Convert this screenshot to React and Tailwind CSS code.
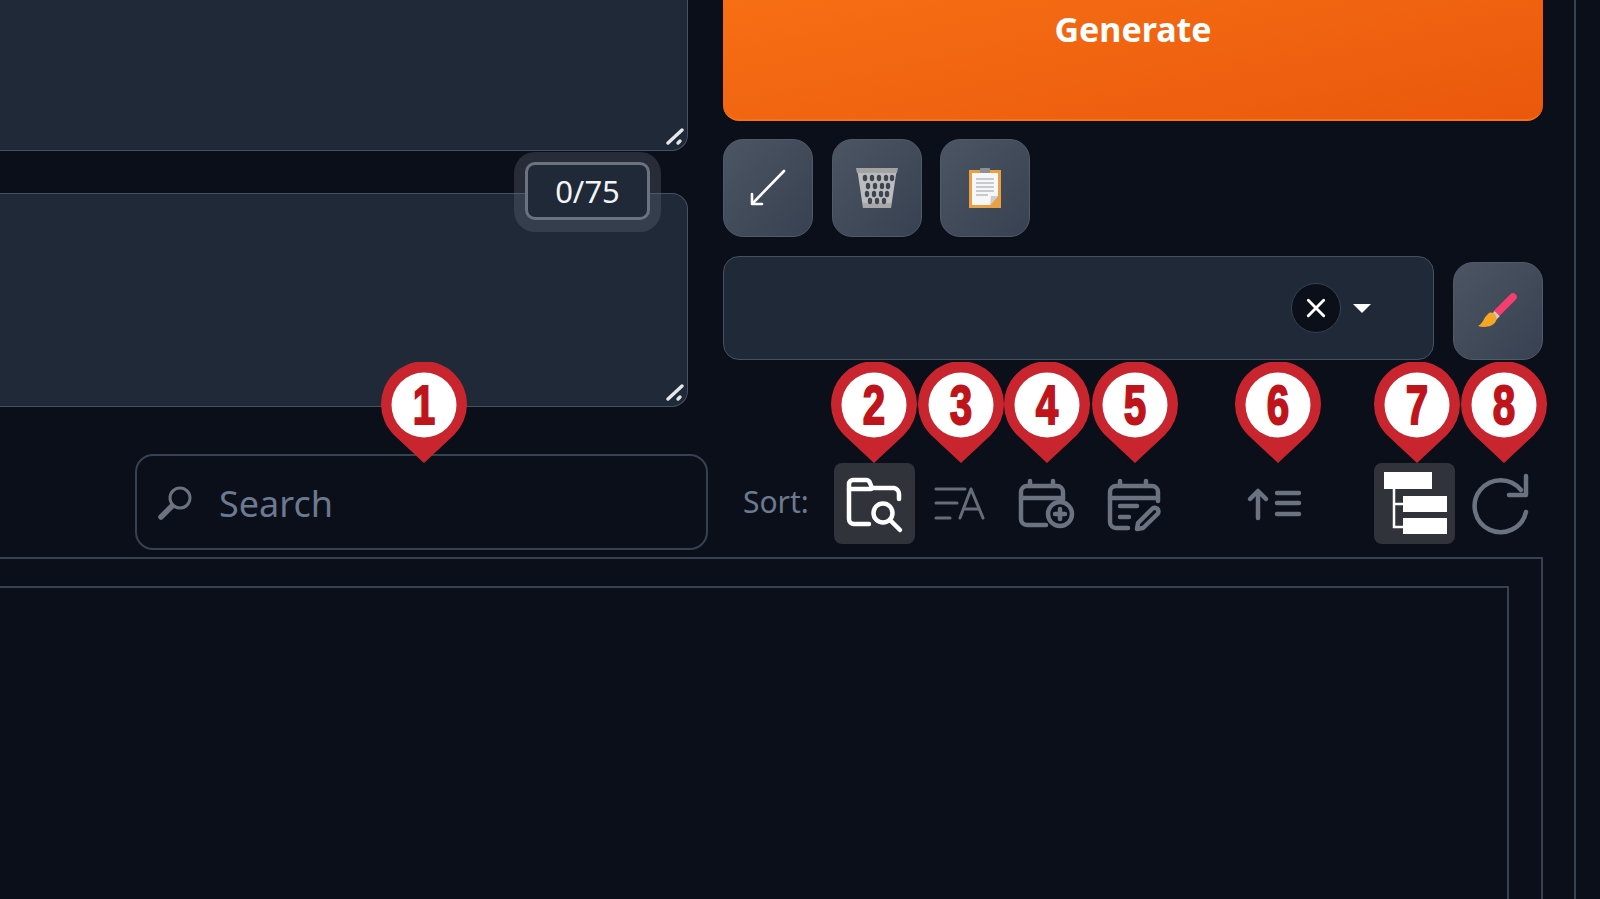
import React from "react";

const pins = [
  { n: "1", left: "left-[381px]" },
  { n: "2", left: "left-[831px]" },
  { n: "3", left: "left-[918px]" },
  { n: "4", left: "left-[1004px]" },
  { n: "5", left: "left-[1092px]" },
  { n: "6", left: "left-[1235px]" },
  { n: "7", left: "left-[1374px]" },
  { n: "8", left: "left-[1461px]" },
];

// Numbered callout marker sitting over the toolbar
function Pin({ n, left }) {
  return (
    <div className={`absolute top-[362px] h-[101px] w-[86px] ${left}`}>
      <svg viewBox="0 0 86 101" className="absolute inset-0 h-full w-full">
        <path d="M43 101 L13 73 A43 43 0 1 1 73 73 Z" fill="#c9252e" />
        <circle cx="43" cy="43" r="32.5" fill="#fff" />
      </svg>
      <span className="absolute left-0 top-[3px] block w-full scale-x-[0.72] text-center font-['Liberation_Sans',sans-serif] text-[56px] font-bold leading-[80px] text-[#c0141c] [-webkit-text-stroke:2px_#c0141c]">
        {n}
      </span>
    </div>
  );
}

function ResizeGrip() {
  return (
    <svg viewBox="0 0 18 18" className="absolute bottom-[4px] right-[3px] h-[18px] w-[18px]" fill="none" stroke="#e5e7eb" strokeWidth="3.4" strokeLinecap="round">
      <path d="M2 15 16 2" />
      <path d="M12 15 14 13" />
    </svg>
  );
}

function ToolButton({ children, className = "" }) {
  return (
    <div className={`flex h-[98px] w-[90px] items-center justify-center rounded-[20px] border border-[#525a69] bg-gradient-to-br from-[#4b5563] to-[#374151] ${className}`}>
      {children}
    </div>
  );
}

function SortButton({ active, children }) {
  return (
    <button className={`h-[81px] w-[81px] rounded-lg ${active ? "bg-[#303339]" : ""}`}>
      <svg viewBox="0 0 81 81" className="h-[81px] w-[81px]" fill="none" strokeLinecap="round" strokeLinejoin="round">
        {children}
      </svg>
    </button>
  );
}

function TrashIcon() {
  const holes = [
    [9, 11], [16, 11], [23, 11], [30, 11], [36, 11],
    [12, 19], [19, 19], [26, 19], [32, 19],
    [11, 27], [18, 27], [25, 27], [31, 27],
    [14, 34], [21, 34], [28, 34],
  ];
  return (
    <svg viewBox="0 0 42 42" className="h-[42px] w-[42px]">
      <path d="M1 1 H41 L35 41 H7 Z" fill="#bcbcbc" />
      <path d="M0 1 H42 L41 6 H1 Z" fill="#a3a3a3" />
      <path d="M7 36 H35 L35 41 H7 Z" fill="#a8a8a8" />
      {holes.map(([x, y], i) => (
        <ellipse key={i} cx={x} cy={y} rx="2.2" ry="3.2" fill="#3d4552" />
      ))}
    </svg>
  );
}

function ClipboardIcon() {
  return (
    <svg viewBox="0 0 32 40" className="h-[40px] w-[32px]">
      <rect x="0" y="2" width="32" height="38" fill="#e9a045" />
      <path d="M3 5 H29 V28 L21 37 H3 Z" fill="#f7f7f7" />
      <path d="M21 37 L29 28 H22 Z" fill="#c9ced6" />
      <rect x="11" y="0" width="10" height="5" rx="1" fill="#8d8f94" />
      <path d="M7 11 H25 M7 15 H25 M7 19 H25 M7 23 H25 M7 27 H19" stroke="#9a9ea6" strokeWidth="1.2" />
    </svg>
  );
}

function BrushIcon() {
  return (
    <svg viewBox="0 0 40 36" className="-ml-[2px] h-[36px] w-[40px]">
      <path d="M36 4 L20 20" stroke="#f43f6e" strokeWidth="7.5" strokeLinecap="round" />
      <path d="M16 20 L21 25" stroke="#c9ced6" strokeWidth="5" />
      <path d="M12 20 C17 18 21 24 19 28 C16 34 7 35 1 33 C6 31 6 25 12 20 Z" fill="#f5a623" />
    </svg>
  );
}

export default function App() {
  return (
    <div className="relative h-[899px] w-[1600px] overflow-hidden bg-[#0b0f19] font-['Noto_Sans',sans-serif]">
      <div className="flex h-full w-[1576px] flex-col border-r-2 border-[#374151]">
        <div className="flex gap-[35px]">
          {/* prompt boxes */}
          <div className="w-[688px]">
            <div className="relative -mt-[49px] h-[200px] rounded-r-2xl border-y border-r border-[#465061] bg-[#1f2937]">
              <ResizeGrip />
            </div>
            <div className="relative mt-[42px] h-[214px] rounded-r-2xl border-y border-r border-[#465061] bg-[#1f2937]">
              <div className="absolute -top-[32px] right-[37px] flex h-[58px] w-[125px] items-center justify-center rounded-[10px] border-[3px] border-[#6b7280] bg-[#1f2937] text-[31px] text-[#f3f4f6] shadow-[0_1px_0_11px_rgba(107,114,128,0.3)]">
                0/75
              </div>
              <ResizeGrip />
            </div>
          </div>

          {/* generate column */}
          <div className="w-[820px]">
            <button className="-mt-[61px] flex h-[182px] w-full items-center justify-center rounded-2xl border-b-2 border-[#f97316] bg-gradient-to-br from-[#f97316] to-[#ea580c] text-[34px] font-bold text-white">
              Generate
            </button>
            <div className="mt-[18px] flex gap-[19px]">
              <ToolButton>
                <svg viewBox="0 0 40 40" className="h-[40px] w-[40px]" fill="none" stroke="#fff" strokeWidth="2.6" strokeLinecap="round" strokeLinejoin="round">
                  <path d="M36 3 5 35" />
                  <path d="M4 26 4 36 14 36" />
                </svg>
              </ToolButton>
              <ToolButton>
                <TrashIcon />
              </ToolButton>
              <ToolButton className="-ml-px">
                <ClipboardIcon />
              </ToolButton>
            </div>
            <div className="mt-[19px] flex items-end gap-[19px]">
              <div className="flex h-[104px] w-[711px] items-center rounded-2xl border border-[#465061] bg-[#1f2937] pl-[567px]">
                <div className="flex h-[50px] w-[50px] items-center justify-center rounded-full border border-[#374151] bg-[#0b0f19]">
                  <svg viewBox="0 0 20 20" className="h-[22px] w-[22px]" fill="none" stroke="#fff" strokeWidth="2.6" strokeLinecap="round">
                    <path d="M3 3 17 17M17 3 3 17" />
                  </svg>
                </div>
                <svg viewBox="0 0 18 9" className="ml-[12px] h-[9px] w-[18px]">
                  <path d="M0 0 H18 L9 9 Z" fill="#fff" />
                </svg>
              </div>
              <ToolButton>
                <BrushIcon />
              </ToolButton>
            </div>
          </div>
        </div>

        {/* search and sort row */}
        <div className="mt-[47px] flex h-[96px] items-start pl-[135px]">
          <div className="flex h-[96px] w-[573px] items-center rounded-[18px] border-2 border-[#374151] bg-[#0b0f19] pt-[3px]">
            <svg viewBox="0 0 38 38" className="ml-[19px] h-[38px] w-[38px]" fill="none" stroke="#6b7280" strokeLinecap="round">
              <circle cx="24" cy="13" r="10" strokeWidth="3" />
              <path d="M16 21 5 32" strokeWidth="5.5" />
            </svg>
            <span className="ml-[25px] text-[36px] leading-none text-[#6b7a90]">Search</span>
          </div>

          <div className="ml-[35px] mt-[9px] flex items-center">
            <span className="mb-[10px] w-[91px] text-[30px] leading-none text-[#6b7a90]">Sort:</span>
            <div className="flex gap-[5px]">
              <SortButton active>
                <g stroke="#fff" strokeWidth="4.5">
                  <path d="M35 61 H20 a5 5 0 0 1 -5 -5 V21 a4 4 0 0 1 4 -4 h13 q3 0 4 3 l2 5 h22 a6 6 0 0 1 5 6 v5" />
                  <path d="M15 26 H37" />
                  <circle cx="49" cy="50" r="9.5" />
                  <path d="M56 57 66 67" />
                </g>
              </SortButton>
              <SortButton>
                <g stroke="#666d7a" strokeWidth="3">
                  <path d="M16 26 H45 M16 40 H37 M16 55 H30" />
                  <path d="M40 55 51 26 63 55 M44 46 H59" />
                </g>
              </SortButton>
              <SortButton>
                <g stroke="#6b7280" strokeWidth="4.5">
                  <path d="M57 37 V29 a6 6 0 0 0 -6 -6 H21 a6 6 0 0 0 -6 6 V56 a6 6 0 0 0 6 6 H40" />
                  <path d="M15 35 H57 M24 18 v5 M47 18 v5" />
                  <circle cx="54" cy="51" r="12" />
                  <path d="M54 46 v10 M49 51 h10" />
                </g>
              </SortButton>
              <SortButton>
                <g stroke="#6b7280" strokeWidth="4.5">
                  <path d="M66 38 V29 a6 6 0 0 0 -6 -6 H24 a6 6 0 0 0 -6 6 V59 a6 6 0 0 0 6 6 H36" />
                  <path d="M18 35 H66 M28 18 v5 M54 18 v5 M28 43 H45 M28 54 H37" />
                  <path d="M45 66 l1 -6 L60 46 a3.5 3.5 0 0 1 5.5 5 L51 65 Z" />
                </g>
              </SortButton>
              <div className="ml-[56px]">
                <SortButton>
                  <g stroke="#6b7280" strokeWidth="4.5">
                    <path d="M24 29 V55" />
                    <path d="M16 36 24 28 32 36" />
                    <path d="M43 30 H65 M43 40 H65 M43 51 H65" />
                  </g>
                </SortButton>
              </div>
              <div className="ml-[54px]">
                <SortButton active>
                  <g stroke="#fff" strokeWidth="2.5" strokeLinecap="butt" strokeLinejoin="miter">
                    <path d="M20 26 V64 H30 M20 41 H30" />
                  </g>
                  <rect x="10" y="9" width="48" height="17" fill="#fff" />
                  <rect x="29" y="33" width="44" height="16" fill="#fff" />
                  <rect x="29" y="55" width="44" height="16" fill="#fff" />
                </SortButton>
              </div>
              <SortButton>
                <g stroke="#6b7280" strokeWidth="4.5">
                  <path d="M66 49 A26 26 0 1 1 61 27" />
                  <path d="M66 13 V32 H49" />
                </g>
              </SortButton>
            </div>
          </div>
        </div>

        {/* gallery frames */}
        <div className="mt-[7px] w-[1543px] flex-1 border-r-2 border-t-2 border-[#374151] pr-[32px] pt-[27px]">
          <div className="h-full border-r-2 border-t-2 border-[#374151]" />
        </div>
      </div>

      {pins.map((p) => (
        <Pin key={p.n} n={p.n} left={p.left} />
      ))}
    </div>
  );
}
